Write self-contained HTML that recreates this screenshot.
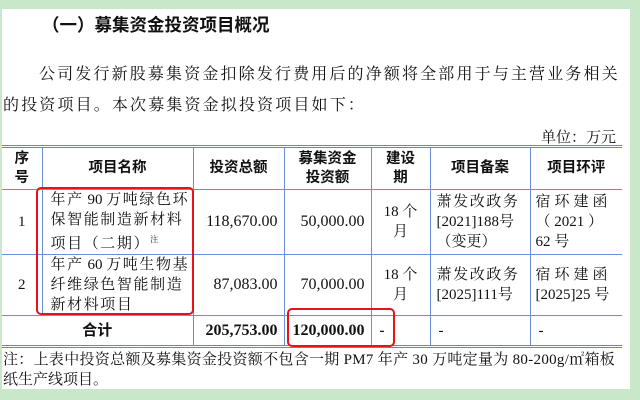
<!DOCTYPE html>
<html><head><meta charset="utf-8"><style>
body{margin:0;width:640px;height:400px;background:#c9e7c9;position:relative;overflow:hidden;font-family:"Liberation Serif","Noto Serif CJK SC",serif;color:#111}
.panel{position:absolute;left:2px;top:9px;width:628px;height:380px;background:#fff}
.t{position:absolute;white-space:nowrap}
table{position:absolute;left:2px;top:145px;border-collapse:collapse;table-layout:fixed;border-top:3px double #5b86d6;border-bottom:3px double #5b86d6;font-size:15px}
td{border:1px solid #6a90da;padding:0;vertical-align:middle;line-height:20px;border-top:none;white-space:nowrap;overflow:visible}
td:first-child{border-left:none}td:last-child{border-right:none}
.h td{font-family:"Liberation Sans","Noto Sans CJK SC",sans-serif;font-weight:bold;text-align:center;font-size:14.5px;line-height:19px}
.c{text-align:center}.r{text-align:right;padding-right:6px;font-size:16px}
.b{font-weight:bold}
.ls{letter-spacing:1.6px}
.box{position:absolute;border:2.5px solid #e8121a;border-radius:5px}
</style></head><body>
<div class="panel"></div>
<div class="t" style="left:42px;top:12px;font-family:'Liberation Sans','Noto Sans CJK SC',sans-serif;font-weight:bold;font-size:17.5px">（一）募集资金投资项目概况</div>
<div class="t" style="left:39px;top:61px;font-size:16px;letter-spacing:2.15px">公司发行新股募集资金扣除发行费用后的净额将全部用于与主营业务相关</div>
<div class="t" style="left:3px;top:92px;font-size:16px;letter-spacing:2.15px">的投资项目。本次募集资金拟投资项目如下：</div>
<div class="t" style="left:541px;top:126px;font-size:15px">单位：万元</div>
<table>
<colgroup><col style="width:40px"><col style="width:151px"><col style="width:91px"><col style="width:87px"><col style="width:59px"><col style="width:100px"><col style="width:92px"></colgroup>
<tr class="h" style="height:43px"><td>序<br>号</td><td>项目名称</td><td>投资总额</td><td>募集资金<br>投资额</td><td>建设<br>期</td><td>项目备案</td><td>项目环评</td></tr>
<tr style="height:61px"><td class="c">1</td><td style="padding-left:8px"><span class="ls">年产</span> 90 <span class="ls">万吨绿色环</span><br><span class="ls">保智能制造新材料</span><br><span class="ls">项目（二期）</span><sup style="font-size:8px">注</sup></td><td class="r">118,670.00</td><td class="r">50,000.00</td><td class="c">18 个<br>月</td><td style="padding-left:6px"><span class="ls">萧发改政务</span><br>[2021]188号<br>（变更）</td><td style="padding-left:5px"><span style="letter-spacing:4px">宿环建函</span><br>（ 2021 ）<br>62 号</td></tr>
<tr style="height:61px"><td class="c">2</td><td style="padding-left:8px"><span class="ls">年产</span> 60 <span class="ls">万吨生物基</span><br><span class="ls">纤维绿色智能制造</span><br><span class="ls">新材料项目</span></td><td class="r">87,083.00</td><td class="r">70,000.00</td><td class="c">18 个<br>月</td><td style="padding-left:6px"><span class="ls">萧发改政务</span><br>[2025]111号</td><td style="padding-left:5px"><span style="letter-spacing:4px">宿环建函</span><br>[2025]25 号</td></tr>
<tr style="height:31px"><td colspan="2" class="c b" style="font-family:'Liberation Sans','Noto Sans CJK SC',sans-serif">合计</td><td class="r b">205,753.00</td><td class="r b">120,000.00</td><td class="b" style="padding-left:8px">-</td><td style="padding-left:8px">-</td><td style="padding-left:8px">-</td></tr>
</table>
<div class="box" style="left:36px;top:187px;width:154px;height:124px"></div>
<div class="box" style="left:287px;top:308px;width:104px;height:35px"></div>
<div class="t" style="left:3px;top:348px;font-size:15px;letter-spacing:0.3px">注：上表中投资总额及募集资金投资额不包含一期 PM7 年产 30 万吨定量为 80-200g/㎡箱板</div>
<div class="t" style="left:3px;top:368px;font-size:15px">纸生产线项目。</div>
</body></html>
